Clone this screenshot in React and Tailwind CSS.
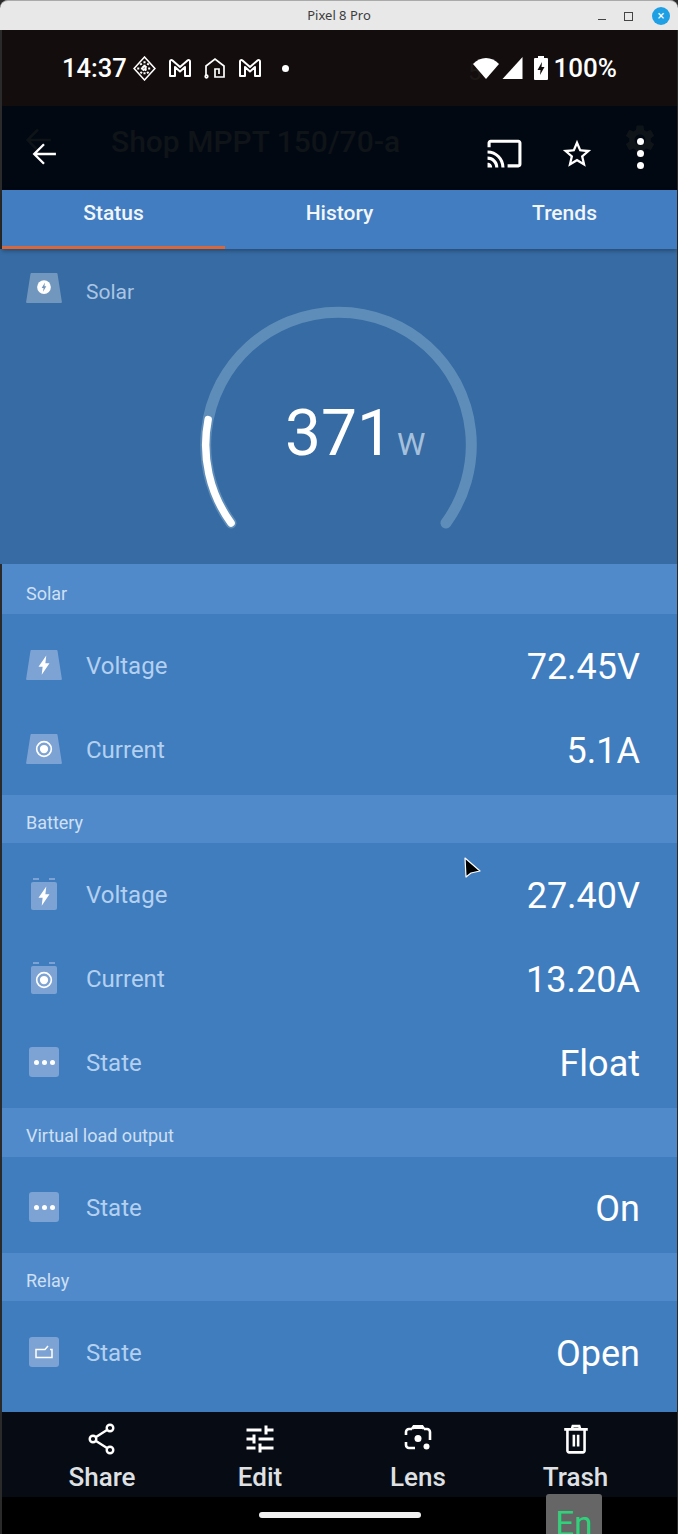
import React from 'react';

const MAT = {
  cast: 'M21 3H3c-1.1 0-2 .9-2 2v3h2V5h18v14h-7v2h7c1.1 0 2-.9 2-2V5c0-1.1-.9-2-2-2zM1 18v3h3c0-1.66-1.34-3-3-3zm0-4v2c2.76 0 5 2.24 5 5h2c0-3.87-3.13-7-7-7zm0-4v2c4.97 0 9 4.03 9 9h2c0-6.08-4.93-11-11-11z',
  star: 'M22 9.24l-7.19-.62L12 2 9.19 8.63 2 9.24l5.46 4.73L5.82 21 12 17.27 18.18 21l-1.63-7.03L22 9.24zM12 15.4l-3.76 2.27 1-4.28-3.32-2.88 4.38-.38L12 6.1l1.71 4.04 4.38.38-3.32 2.88 1 4.28L12 15.4z',
  tune: 'M3 17v2h6v-2H3zM3 5v2h10V5H3zm10 16v-2h8v-2h-8v-2h-2v6h2zM7 9v2H3v2h4v2h2V9H7zm14 4v-2H11v2h10zm-6-4h2V7h4V5h-4V3h-2v6z',
  gear: 'M19.14 12.94c.04-.3.06-.61.06-.94 0-.32-.02-.64-.07-.94l2.03-1.58a.49.49 0 0 0 .12-.61l-1.92-3.32a.488.488 0 0 0-.59-.22l-2.39.96c-.5-.38-1.03-.7-1.62-.94l-.36-2.54a.484.484 0 0 0-.48-.41h-3.84c-.24 0-.43.17-.47.41l-.36 2.54c-.59.24-1.13.57-1.62.94l-2.39-.96c-.22-.08-.47 0-.59.22L2.74 8.87c-.12.21-.08.47.12.61l2.03 1.58c-.05.3-.09.63-.09.94s.02.64.07.94l-2.03 1.58a.49.49 0 0 0-.12.61l1.92 3.32c.12.22.37.29.59.22l2.39-.96c.5.38 1.03.7 1.62.94l.36 2.54c.05.24.24.41.48.41h3.84c.24 0 .44-.17.47-.41l.36-2.54c.59-.24 1.13-.56 1.62-.94l2.39.96c.22.08.47 0 .59-.22l1.92-3.32c.12-.22.07-.47-.12-.61l-2.01-1.58zM12 15.6c-1.98 0-3.6-1.62-3.6-3.6s1.62-3.6 3.6-3.6 3.6 1.62 3.6 3.6-1.62 3.6-3.6 3.6z',
};

const Mat = ({ d, className }) => (
  <svg viewBox="0 0 24 24" className={className} fill="currentColor">
    <path d={d} />
  </svg>
);

const Arrow = ({ className }) => (
  <svg viewBox="0 0 24 24" className={className} fill="none" stroke="currentColor" strokeWidth="2.2">
    <path d="M23 12H3M12 3l-9 9 9 9" />
  </svg>
);

const MailM = () => (
  <svg viewBox="0 0 24 24" className="w-[24px] h-[24px]" fill="none" stroke="currentColor" strokeWidth="2" strokeLinejoin="round">
    <path d="M2 20V5.500C2 4 3.500 3.600 4.500 4.500L12 11l7.500-6.500c1-.9 2.500-.5 2.500 1V20h-5V11l-5 4.500L7 11v9z" />
  </svg>
);

const HomeIcon = () => (
  <svg viewBox="0 0 24 24" className="w-[24px] h-[24px]" fill="none" stroke="currentColor" strokeWidth="1.700">
    <path d="M3 20V10l9-7 9 7v11h-9v-8h4v5" />
    <circle cx="3.500" cy="20.500" r="1.300" />
  </svg>
);

const DiamondLogo = () => (
  <svg viewBox="0 0 24 24" className="w-[25px] h-[25px]" fill="none" stroke="currentColor">
    <path d="M12 1l10 11-10 11L2 12z" strokeWidth="1.500" />
    <path d="M8 7l8 10M16 7L8 17M5 12h14M12 5v14" strokeWidth="2" strokeDasharray="2 1.500" />
  </svg>
);

const Bolt = () => <path d="M14.500 1.500 L6 14 H10.500 L9.500 22.500 L18 10 H13.500 Z" fill="#fff" />;

const Target = () => (
  <>
    <circle cx="12" cy="12" r="8" fill="none" stroke="#fff" strokeWidth="1.800" />
    <circle cx="12" cy="12" r="4.500" fill="#fff" />
  </>
);

// panel shaped tile, for solar values
const PanelTile = ({ children, dark }) => (
  <svg viewBox="0 0 36 30" className="w-[36px] h-[30px]">
    <path d="M5.500 0h25a1 1 0 0 1 1 .8L35.800 28.500a1 1 0 0 1-1 1.500H1.200a1 1 0 0 1-1-1.500L4.500 .8A1 1 0 0 1 5.500 0z" fill={dark ? '#7297be' : '#7ca3d3'} />
    <svg x="7" y="4" width="22" height="22" viewBox="0 0 24 24">{children}</svg>
  </svg>
);

const BatteryTile = ({ children }) => (
  <svg viewBox="0 0 28 32" className="w-[28px] h-[32px]">
    <rect x="3" y="0" width="6" height="2" fill="#7ca3d3" />
    <rect x="19" y="0" width="6" height="2" fill="#7ca3d3" />
    <rect x="1" y="4" width="26" height="28" rx="2" fill="#7ca3d3" />
    <svg x="3" y="7" width="22" height="22" viewBox="0 0 24 24">{children}</svg>
  </svg>
);

const SquareTile = ({ children }) => (
  <div className="w-[30px] h-[30px] rounded-[3px] bg-[#7ca3d3] flex items-center justify-center">{children}</div>
);

const Dots = () => (
  <div className="flex gap-[3px]">
    <span className="w-[5px] h-[5px] rounded-full bg-white" />
    <span className="w-[5px] h-[5px] rounded-full bg-white" />
    <span className="w-[5px] h-[5px] rounded-full bg-white" />
  </div>
);

const RelayGlyph = () => (
  <svg viewBox="0 0 18 14" className="w-[18px] h-[14px]" fill="none" stroke="#fff" strokeWidth="1.500">
    <path d="M13 1L10 4.500H1V12.500H17V4.500H15" />
  </svg>
);

const Section = ({ title, h, pt = 'pt-[8px]' }) => (
  <div className={`${h} ${pt} bg-[#518acb] flex items-center pl-[24px] text-[18px] text-[#cfe0f3]`}>{title}</div>
);

const Row = ({ icon, label, value }) => (
  <div className="h-[84px] flex items-center">
    <div className="w-[84px] px-[22px] flex items-center justify-center">{icon}</div>
    <span className="mt-[2px] text-[24px] text-[#b4d0ef]">{label}</span>
    <span className="ml-auto pr-[37px] mt-[3px] text-[36px] text-white">{value}</span>
  </div>
);

const Action = ({ icon, label, className }) => (
  <div className={`flex flex-col items-center ${className}`}>
    <div className="h-[32px] flex items-center justify-center">{icon}</div>
    <span className="mt-[7px] text-[26px] leading-[30px] font-medium text-[#dfe0e3]">{label}</span>
  </div>
);

function Gauge() {
  const cx = 339, cy = 196, r = 133;
  const pt = (deg) => {
    const a = (deg * Math.PI) / 180;
    return `${cx + r * Math.cos(a)} ${cy + r * Math.sin(a)}`;
  };
  return (
    <svg viewBox="0 0 678 315" className="absolute inset-0 w-full h-full">
      <path d={`M${pt(144)} A${r} ${r} 0 1 1 ${pt(36)}`} fill="none" stroke="#5f8db9" strokeWidth="11" strokeLinecap="round" />
      <path d={`M${pt(144)} A${r} ${r} 0 0 1 ${pt(191)}`} fill="none" stroke="#fff" strokeWidth="7.500" strokeLinecap="round" />
    </svg>
  );
}

export default function App() {
  return (
    <div className="relative w-[678px] h-[1534px] overflow-hidden bg-[#2a2a2a] font-['Roboto',sans-serif]">
      {/* window title */}
      <div className="h-[30px] bg-[#e8e8e8] rounded-t-[8px] flex items-center justify-center relative border-t border-[#aaa]">
        <span className="text-[13px] text-[#3c3c3c] font-['Noto_Sans',sans-serif]">Pixel 8 Pro</span>
        <div className="absolute right-[8px] top-[6px] flex items-center gap-[18px]">
          <span className="w-[8px] h-[1px] bg-[#444] mt-[7px]" />
          <span className="w-[9px] h-[9px] border border-[#444]" />
          <span className="ml-[1px] w-[18px] h-[18px] rounded-full bg-[#1fa0e5] text-white text-[13px] leading-[18px] text-center">×</span>
        </div>
      </div>

      <div className="ml-[2px] mr-[1px]">
        {/* status bar */}
        <div className="h-[76px] bg-[#130e0d] flex items-center pl-[60px] pr-[60px] text-white relative">
          <span className="text-[25.500px] font-medium mr-[5px]">14:37</span>
          <div className="flex items-center gap-[11px]">
            <DiamondLogo />
            <MailM />
            <HomeIcon />
            <MailM />
          </div>
          <span className="ml-[20px] w-[7px] h-[7px] rounded-full bg-white" />
          <span className="absolute left-[466px] top-[24px] text-[24px] text-[#1d1817]">5</span>
          <div className="ml-auto flex items-center relative">
            <svg viewBox="0 0 26 22" className="w-[26px] h-[22px]" fill="currentColor"><path d="M0 7 C7 -1 19 -1 26 7 L13 22z" /></svg>
            <svg viewBox="0 0 20 22" className="w-[21px] h-[22px] ml-[3px]" fill="currentColor"><path d="M20 0v22H0z" /></svg>
            <svg viewBox="0 0 14 24" className="w-[14px] h-[24px] ml-[11px]">
              <path d="M4 0h6v2h3a1 1 0 0 1 1 1v20a1 1 0 0 1-1 1H1a1 1 0 0 1-1-1V3a1 1 0 0 1 1-1h3z" fill="#fff" />
              <path d="M8 6L3.500 14H6.500L6 19L10.500 11H7.500z" fill="#130e0d" />
            </svg>
            <span className="text-[26px] font-medium ml-[6px]">100%</span>
          </div>
        </div>

        {/* toolbar */}
        <div className="h-[84px] bg-[#020812] relative flex items-center text-white">
          <Arrow className="absolute left-[22px] top-[20px] w-[28px] h-[28px] text-[#0e1317]" />
          <span className="absolute left-[109px] top-[13px] text-[30px] font-medium text-[#0f1418]">Shop MPPT 150/70-a</span>
          <Mat d={MAT.gear} className="absolute left-[620px] top-[16px] w-[36px] h-[36px] text-[#0f1418]" />
          <Arrow className="relative ml-[29px] mt-[11px] w-[26px] h-[26px]" />
          <div className="ml-auto flex items-center mt-[11px] relative">
            <Mat d={MAT.cast} className="w-[37px] h-[37px]" />
            <Mat d={MAT.star} className="w-[34px] h-[34px] ml-[37px]" />
            <div className="ml-[43px] mr-[33px] flex flex-col gap-[5px]">
              <span className="w-[7px] h-[7px] rounded-full bg-white" />
              <span className="w-[7px] h-[7px] rounded-full bg-white" />
              <span className="w-[7px] h-[7px] rounded-full bg-white" />
            </div>
          </div>
        </div>

        {/* tabs */}
        <div className="relative z-10 h-[59px] bg-[#417dc0] grid grid-cols-3 text-[21px] font-medium text-[#f1f6fb] shadow-[0_2px_4px_rgba(0,0,0,0.3)]">
          <div className="relative flex justify-center pt-[8px] pr-[2px]">
            Status
            <span className="absolute left-0 bottom-0 w-[223px] h-[3px] bg-[#d9673c]" />
          </div>
          <div className="flex justify-center pt-[8px]">History</div>
          <div className="flex justify-center pt-[8px]">Trends</div>
        </div>

        {/* solar gauge */}
        <div className="relative h-[315px] -ml-[2px] bg-[#366ba3]">
          <Gauge />
          <div className="relative flex items-start pl-[26px] pt-[24px]">
            <PanelTile dark>
              <circle cx="12" cy="11" r="7.500" fill="#fff" />
              <path d="M13 6L9.500 12H11.500L11 16L14.500 10H12.500z" fill="#7297be" />
            </PanelTile>
            <span className="ml-[24px] mt-[4px] text-[21px] text-[#a9c5e3]">Solar</span>
          </div>
          <div className="absolute left-[285px] top-[145px] flex items-baseline">
            <span className="text-[64px] leading-[80px] text-white">371</span>
            <span className="ml-[4px] text-[32px] text-[#a5c0dc]">W</span>
          </div>
        </div>

        <Section title="Solar" h="h-[50px]" />
        <div className="bg-[#3f7dbf] pt-[9px] pb-[4px]">
          <Row label="Voltage" value="72.45V" icon={<PanelTile><Bolt /></PanelTile>} />
          <Row label="Current" value="5.1A" icon={<PanelTile><Target /></PanelTile>} />
        </div>
        <Section title="Battery" h="h-[48px]" pt="pt-[6px]" />
        <div className="bg-[#3f7dbf] pt-[9px] pb-[4px]">
          <Row label="Voltage" value="27.40V" icon={<BatteryTile><Bolt /></BatteryTile>} />
          <Row label="Current" value="13.20A" icon={<BatteryTile><Target /></BatteryTile>} />
          <Row label="State" value="Float" icon={<SquareTile><Dots /></SquareTile>} />
        </div>
        <Section title="Virtual load output" h="h-[49px]" pt="pt-[6px]" />
        <div className="bg-[#3f7dbf] pt-[8px] pb-[4px]">
          <Row label="State" value="On" icon={<SquareTile><Dots /></SquareTile>} />
        </div>
        <Section title="Relay" h="h-[48px]" pt="pt-[6px]" />
        <div className="bg-[#3f7dbf] pt-[9px] pb-[18px]">
          <Row label="State" value="Open" icon={<SquareTile><RelayGlyph /></SquareTile>} />
        </div>

        {/* photo actions */}
        <div className="h-[85px] bg-[#060b14] flex text-white pt-[11px]">
          <Action className="w-[200px]" label="Share" icon={
            <svg viewBox="0 0 30 32" className="w-[30px] h-[32px]" fill="none" stroke="currentColor" strokeWidth="2.400">
              <circle cx="23" cy="5" r="3.300" /><circle cx="6" cy="16" r="3.300" /><circle cx="23" cy="27" r="3.300" />
              <path d="M9 14L20 7M9 18L20 25" />
            </svg>
          } />
          <Action className="w-[116px]" label="Edit" icon={<Mat d={MAT.tune} className="w-[36px] h-[36px]" />} />
          <Action className="w-[200px]" label="Lens" icon={
            <svg viewBox="0 0 28 28" className="w-[28px] h-[28px]" fill="none" stroke="currentColor" strokeWidth="2.600">
              <path d="M8 4H5a3 3 0 0 0-3 3v3M2 17v3a3 3 0 0 0 3 3h6M20 4h3a3 3 0 0 1 3 3v8" />
              <path d="M8 4l2-3h8l2 3" fill="currentColor" />
              <circle cx="14" cy="13.500" r="3.500" fill="currentColor" stroke="none" />
              <circle cx="22.500" cy="21.500" r="3" fill="currentColor" stroke="none" />
            </svg>
          } />
          <Action className="w-[115px]" label="Trash" icon={
            <svg viewBox="0 0 24 28" className="w-[26px] h-[30px]" fill="none" stroke="currentColor" strokeWidth="2.400">
              <path d="M1 5h22M8 5l1-3h6l1 3M4 5v20a1.500 1.500 0 0 0 1.500 1.500h13A1.500 1.500 0 0 0 20 25V5M10 10v11M14 10v11" />
            </svg>
          } />
        </div>

        {/* gesture nav */}
        <div className="h-[37px] bg-black flex items-center justify-center pb-[2px]">
          <span className="w-[162px] h-[6px] rounded-full bg-[#f1f1f1]" />
        </div>
      </div>

      {/* on-screen En key, cut by the window edge as in the capture */}
      <div className="absolute left-[546px] top-[1494px] w-[56px] h-[40px] bg-[#666] rounded-t-[3px] overflow-hidden text-center text-[#2fd27a] text-[33px] leading-[44px] pt-[8px]">En</div>

      {/* mouse pointer */}
      <svg viewBox="0 0 18 22" className="absolute left-[463px] top-[856px] w-[18px] h-[22px]">
        <path d="M2 2L17 15L8 17L3 21z" fill="#000" stroke="#fff" strokeWidth="1.200" strokeLinejoin="round" />
      </svg>
    </div>
  );
}
